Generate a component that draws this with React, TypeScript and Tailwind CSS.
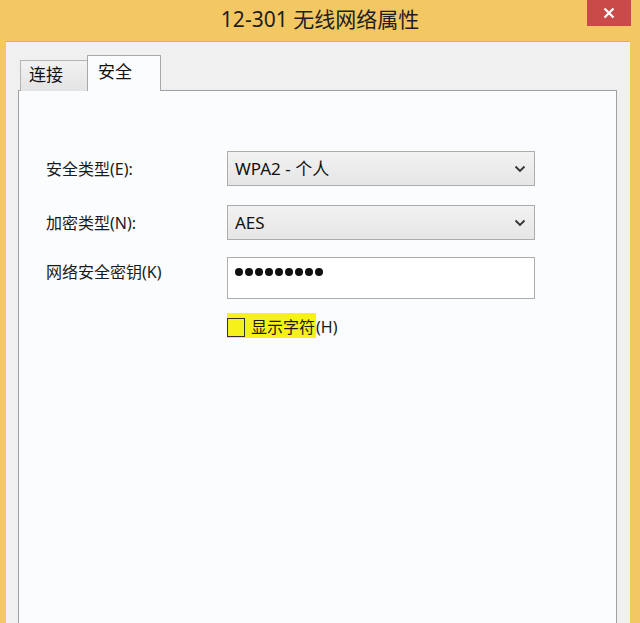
const font = "font-['Noto_Sans','Noto_Sans_CJK_SC',sans-serif]"

const Chevron = () => (
  <svg width="12" height="8" viewBox="0 0 12 8" className="shrink-0">
    <path d="M1.5 1.5 L6 6 L10.5 1.5" fill="none" stroke="#333" strokeWidth="1.8" />
  </svg>
)

const Select = ({ value }: { value: string }) => (
  <div className="flex items-center justify-between h-[35px] w-[308px] border border-[#acacac] bg-gradient-to-b from-[#f2f2f2] to-[#e6e6e6] pl-[7px] pr-[8px]">
    <span className="text-[17px] text-[#111] leading-none">{value}</span>
    <Chevron />
  </div>
)

const dots = [0, 1, 2, 3, 4, 5, 6, 7, 8]

const App = () => {
  return (
    <div className={`w-[640px] h-[623px] overflow-hidden bg-[#f3c863] flex flex-col ${font}`}>
      {/* title bar */}
      <div className="relative h-[41px] shrink-0 flex items-center justify-center">
        <span className="text-[21px] text-[#1e1e1e] -mt-[1px]">12-301 无线网络属性</span>
        <div className="absolute right-[9px] top-0 w-[44px] h-[26px] bg-[#c94a48] flex items-center justify-center">
          <svg width="12" height="12" viewBox="0 0 12 12">
            <path d="M1.5 1.5 L10.5 10.5 M10.5 1.5 L1.5 10.5" stroke="#fff" strokeWidth="2.2" />
          </svg>
        </div>
      </div>

      {/* window body */}
      <div className="flex-1 ml-[6px] mr-[10px] bg-[#f0f0f0] border-t border-[#e4b24c] flex flex-col pl-[12px] pr-[13px] pt-[13px]">
        {/* tabs */}
        <div className="flex items-end h-[36px] pl-[2px] -mb-[1px] relative z-10">
          <div className="h-[31px] w-[67px] border border-r-0 border-b-0 border-[#b4b4b4] bg-gradient-to-b from-[#f2f2f2] to-[#e3e3e3] flex items-start pt-[1px] pl-[8px] text-[17px] text-[#111]">
            连接
          </div>
          <div className="h-[36px] w-[74px] border border-b-0 border-[#a8a8a8] bg-[#fbfcfd] flex items-start pt-[3px] pl-[10px] text-[17px] text-[#111]">
            安全
          </div>
        </div>

        {/* panel */}
        <div className="flex-1 border border-[#a0a0a0] border-b-0 bg-[#fbfcfd] pt-[60px] pl-[27px]">
          <div className="flex items-center h-[35px]">
            <span className="w-[181px] text-[16px] text-[#1a1a1a]">安全类型(E):</span>
            <Select value="WPA2 - 个人" />
          </div>
          <div className="flex items-center h-[35px] mt-[19px]">
            <span className="w-[181px] text-[16px] text-[#1a1a1a]">加密类型(N):</span>
            <Select value="AES" />
          </div>
          <div className="flex items-start mt-[17px]">
            <span className="w-[181px] text-[16px] text-[#1a1a1a] pt-[3px]">网络安全密钥(K)</span>
            <div className="h-[42px] w-[308px] border border-[#acacac] bg-white pl-[7px] pt-[10px] flex gap-[2px]">
              {dots.map((d) => (
                <span key={d} className="w-[8px] h-[8px] rounded-full bg-[#111]" />
              ))}
            </div>
          </div>
          <div className="flex items-center mt-[14px] ml-[181px]">
            <div className="flex items-center h-[25px] bg-[#f6f219] pr-[1px] pt-[3px]">
              <div className="w-[18px] h-[19px] border border-[#333]" />
              <span className="ml-[6px] text-[16px] text-[#1a1a1a] leading-none">显示字符</span>
            </div>
            <span className="text-[16px] text-[#1a1a1a] leading-none pt-[3px]">(H)</span>
          </div>
        </div>
      </div>
    </div>
  )
}

export default App
